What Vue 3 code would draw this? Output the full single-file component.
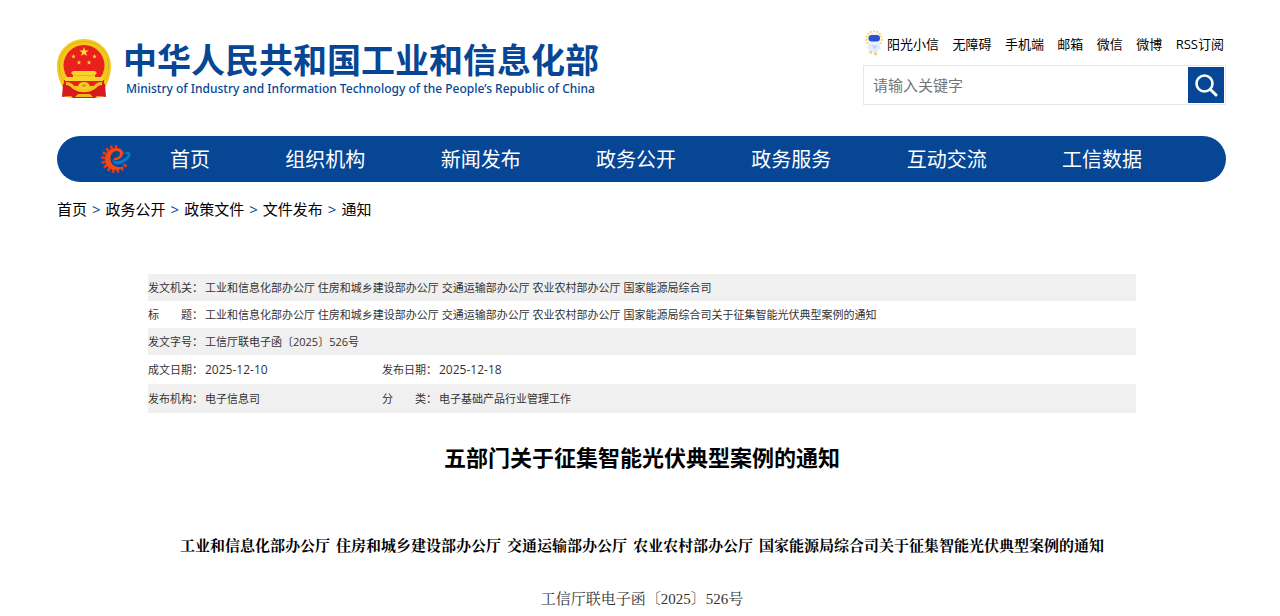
<script setup>
import { ref } from 'vue'

const keyword = ref('')
const tools = ['无障碍', '手机端', '邮箱', '微信', '微博', 'RSS订阅']
const nav = ['首页', '组织机构', '新闻发布', '政务公开', '政务服务', '互动交流', '工信数据']
const crumbs = ['首页', '政务公开', '政策文件', '文件发布', '通知']
const offices = '工业和信息化部办公厅 住房和城乡建设部办公厅 交通运输部办公厅 农业农村部办公厅 国家能源局综合司'
const fullTitle = offices + '关于征集智能光伏典型案例的通知'
const docNo = '工信厅联电子函〔2025〕526号'
const rows = [
  [{ label: '发文机关：', value: offices }],
  [{ label: '标　　题：', value: fullTitle }],
  [{ label: '发文字号：', value: docNo }],
  [{ label: '成文日期：', value: '2025-12-10', date: true }, { label: '发布日期：', value: '2025-12-18', date: true }],
  [{ label: '发布机构：', value: '电子信息司' }, { label: '分　　类：', value: '电子基础产品行业管理工作' }],
]
const teeth = Array.from({ length: 12 }, (_, i) => 5 - i * 22)
const rays = Array.from({ length: 11 }, (_, i) => 150 + i * 24)
const star = '0,-5 1.2,-1.6 4.8,-1.6 1.9,0.6 3,4.1 0,2 -3,4.1 -1.9,0.6 -4.8,-1.6 -1.2,-1.6'
</script>

<template>
  <div class="page">
    <header class="header">
      <a class="brand" href="#">
        <svg class="emblem" viewBox="0 0 54 60" aria-hidden="true">
          <path d="M27 0C42 0 54 12 54 27c0 9-3 17-7 23l2 6-9 3H14L5 56l2-6C3 44 0 36 0 27 0 12 12 0 27 0z" fill="#f4c91d" />
          <path d="M27 2.500C41 2.500 51.500 13 51.500 27c0 8-3 15-8 20M27 2.500C13 2.500 2.500 13 2.500 27c0 8 3 15 8 20" fill="none" stroke="#e3b01b" stroke-width="1" />
          <circle cx="27" cy="26.500" r="20.500" fill="#e9201e" />
          <path d="M7 41h40v6H7z" fill="#e9201e" />
          <polygon :points="star" fill="#ffdc35" transform="translate(27 13)" />
          <g fill="#ffd52e">
            <polygon :points="star" transform="translate(16.500 17.500) scale(.5)" />
            <polygon :points="star" transform="translate(37.500 17.500) scale(.5)" />
            <polygon :points="star" transform="translate(22 23.500) scale(.5)" />
            <polygon :points="star" transform="translate(32 23.500) scale(.5)" />
          </g>
          <path d="M16 32h22l2 2-2 2v2h8v4H8v-4h8v-2l-2-2z" fill="#f8d329" />
          <path d="M17 36.500h20" stroke="#e0a21c" stroke-width=".7" />
          <path d="M6 45c3-2 8-1 11 2l4 3c4 2 8 2 12 0l4-3c3-3 8-4 11-2l1 13-9-1-2 2H16l-2-2-9 1z" fill="#d91920" />
          <path d="M9 43c5 0 7 3 10 5 5 3 11 3 16 0 3-2 5-5 10-5v3c-4 0-5 3-9 5-5 3-13 3-18 0-4-2-5-5-9-5z" fill="#f5c41d" />
          <ellipse cx="27" cy="46.500" rx="5.500" ry="3.500" fill="#f7d12a" />
          <ellipse cx="27" cy="46.500" rx="2.500" ry="1.500" fill="#e49b1b" />
          <path d="M21 55h12l3 3h-18z" fill="#efb61c" />
        </svg>
        <span class="names">
          <strong class="name-cn">中华人民共和国工业和信息化部</strong>
          <span class="name-en">Ministry of Industry and Information Technology of the People’s Republic of China</span>
        </span>
      </a>
      <div class="side">
        <nav class="tools" aria-label="快捷链接">
          <a class="mascot-link" href="#">
            <svg class="mascot" viewBox="0 0 18 26" aria-hidden="true">
              <circle v-for="a in rays" :key="a" cx="9" cy="1.300" r="1.100" fill="#ffd45b" :transform="`rotate(${a + 90} 9 9)`" />
              <path d="M4 13h10l2 6-3 1-1 4H9l-1-3-2 3-3-1 1-4-2-1z" fill="#e3ebfb" />
              <circle cx="9" cy="8.500" r="6.300" fill="#edf3ff" />
              <rect x="3.500" y="5" width="11.500" height="6.500" rx="3.200" fill="#2d50cb" />
              <path d="M6 15l6 1-2 3z" fill="#bccff7" />
              <circle cx="6" cy="22.500" r="1.200" fill="#ffc65b" />
              <circle cx="10.500" cy="24" r="1.400" fill="#ffc65b" />
            </svg>阳光小信</a>
          <a v-for="t in tools" :key="t" href="#">{{ t }}</a>
        </nav>
        <form class="search" role="search" @submit.prevent>
          <input v-model="keyword" type="text" aria-label="请输入关键字" placeholder="请输入关键字" />
          <button type="submit" aria-label="搜索">
            <svg viewBox="0 0 24 24" aria-hidden="true">
              <circle cx="10.500" cy="10.500" r="8" fill="none" stroke="#fff" stroke-width="2.600" />
              <path d="M16.500 16.500l5.500 5.500" stroke="#fff" stroke-width="3" stroke-linecap="round" />
            </svg>
          </button>
        </form>
      </div>
    </header>

    <nav class="main-nav" aria-label="主导航">
      <svg class="gear" viewBox="0 0 30 30" aria-hidden="true">
        <rect v-for="a in teeth" :key="a" x="12.500" y="1" width="2.800" height="4" rx=".4" fill="#d83a22" :transform="`rotate(${a} 14 15)`" />
        <path d="M23.500 22.500C17 28.500 4 26.500 4 15.500 4 8 10 4 15.500 4c5 0 7.500 3 6.500 6.500-1.200 4-5.500 6-9.500 5.800l.5-2.300c3 0 5.500-1.500 6-4 .4-2-1.200-3-3.500-3C12 7 9.500 10.500 9.500 14.500c0 8 8 10 14 8z" fill="#f04a16" />
        <path d="M11 15.500c3 4 13 .5 16-4.500-1-2-4-1.500-6-.5 3-3 7.500-3.500 8.500-1 .5 4-6 11-13 11-3 0-5-2-5.500-5z" fill="#0b78cc" />
      </svg>
      <ul>
        <li v-for="n in nav" :key="n"><a href="#">{{ n }}</a></li>
      </ul>
    </nav>

    <nav class="crumbs" aria-label="当前位置">
      <template v-for="(c, i) in crumbs" :key="c">
        <span v-if="i" class="sep">&gt;</span>
        <a href="#">{{ c }}</a>
      </template>
    </nav>

    <main class="article">
      <table class="meta">
        <colgroup><col class="c-label" /><col class="c-value" /><col class="c-label" /><col /></colgroup>
        <tbody>
          <tr v-for="(r, i) in rows" :key="i" :class="{ pair: r.length > 1 }">
            <template v-for="f in r" :key="f.label">
              <th scope="row">{{ f.label }}</th>
              <td :colspan="r.length > 1 ? 1 : 3" :class="{ date: f.date }">{{ f.value }}</td>
            </template>
          </tr>
        </tbody>
      </table>
      <h1>五部门关于征集智能光伏典型案例的通知</h1>
      <h2><span v-for="part in fullTitle.split(' ')" :key="part">{{ part }}</span></h2>
      <p class="doc-no">{{ docNo }}</p>
    </main>
  </div>
</template>

<style>
body {
  margin: 0;
  background: #fff;
  overflow: hidden;
}
</style>

<style scoped>
.page {
  padding: 28px 54px 0 57px;
  font-family: "Open Sans", "Noto Sans CJK SC", sans-serif;
  color: #000;
}
a {
  color: inherit;
  text-decoration: none;
}
.header {
  display: flex;
  justify-content: space-between;
  height: 108px;
}
.brand {
  display: flex;
  align-items: flex-start;
  gap: 12px;
  padding-top: 11px;
  color: #064694;
}
.emblem {
  width: 54px;
  height: 60px;
}
.names {
  display: flex;
  flex-direction: column;
  white-space: nowrap;
}
.name-cn {
  font-size: 34px;
  line-height: 43px;
}
.name-en {
  padding-left: 3px;
  font-family: "Noto Sans", sans-serif;
  font-size: 12px;
  font-weight: 500;
  line-height: 14px;
}
.side {
  width: 363px;
}
.tools {
  display: flex;
  align-items: center;
  justify-content: space-between;
  height: 30px;
  padding: 0 2px;
  font-size: 13px;
  white-space: nowrap;
}
.mascot-link {
  display: flex;
  align-items: center;
  gap: 4px;
}
.mascot {
  width: 18px;
  height: 26px;
}
.search {
  display: flex;
  margin-top: 7px;
  padding: 1px;
  border: 1px solid #e6e6e6;
}
.search input {
  flex: 1;
  min-width: 0;
  padding: 0 8px;
  border: 0;
  outline: 0;
  font: inherit;
  font-size: 15px;
}
.search input::placeholder {
  color: #757575;
}
.search button {
  display: grid;
  place-items: center;
  width: 36px;
  height: 36px;
  padding: 0;
  border: 0;
  background: #064694;
}
.search svg {
  width: 24px;
  height: 24px;
}
.main-nav {
  display: flex;
  align-items: center;
  height: 46px;
  padding: 0 84px 0 44px;
  border-radius: 23px;
  background: #064694;
  color: #fff;
}
.gear {
  width: 30px;
  height: 30px;
}
.main-nav ul {
  display: flex;
  flex: 1;
  justify-content: space-between;
  margin: 0 0 0 39px;
  padding: 2px 0 0;
  list-style: none;
  font-size: 20px;
  line-height: 44px;
  white-space: nowrap;
}
.crumbs {
  display: flex;
  gap: 5px;
  margin-top: 15px;
  font-size: 15px;
  line-height: 24px;
}
.sep {
  color: #064694;
}
.article {
  padding: 0 90px 0 91px;
  text-align: center;
}
.meta {
  width: 100%;
  margin-top: 53px;
  border-collapse: collapse;
  table-layout: fixed;
  text-align: left;
  font-size: 11px;
  line-height: 27px;
  color: #333;
}
.c-label {
  width: 57px;
}
.c-value {
  width: 177px;
}
.meta tr:nth-child(odd) {
  background: #f0f0f0;
}
.meta .pair {
  line-height: 29px;
}
.meta th,
.meta td {
  padding: 0;
  font-weight: 400;
  white-space: nowrap;
}
.meta .date {
  font-size: 12px;
}
h1 {
  margin: 27px 0 0;
  font-size: 22px;
  line-height: 34px;
}
h2,
.doc-no {
  margin: 60px 0 0;
  font-family: "Liberation Serif", "Noto Serif CJK SC", "Noto Sans CJK SC", serif;
  font-size: 15px;
  line-height: 24px;
}
h2 {
  display: flex;
  justify-content: center;
  gap: 6px;
  white-space: nowrap;
}
.doc-no {
  margin-top: 29px;
  color: #333;
}
</style>
